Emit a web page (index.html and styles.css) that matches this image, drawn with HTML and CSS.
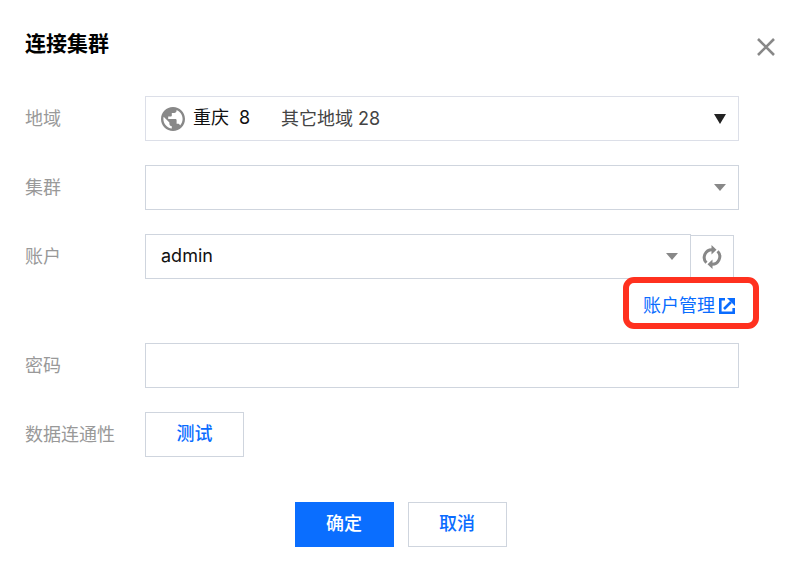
FILE: index.html
```html
<!DOCTYPE html>
<html lang="zh-CN">
<head>
<meta charset="utf-8">
<meta name="viewport" content="width=device-width, initial-scale=1">
<title>连接集群</title>
<link rel="stylesheet" href="styles.css">
</head>
<body>
<main class="dialog">
  <header class="dialog-header">
    <h1 class="dialog-title">连接集群</h1>
    <button class="close" type="button" aria-label="关闭">
      <svg width="18" height="18" viewBox="0 0 18 18"><path d="M1 1l16 16M17 1L1 17" fill="none" stroke="currentColor" stroke-width="2.6"/></svg>
    </button>
  </header>
  <form class="form">
    <div class="row">
      <label class="label" for="region">地域</label>
      <div class="field field-region">
        <svg class="globe" width="24" height="24" viewBox="2 2 20 20"><path fill="currentColor" d="M12 2C6.48 2 2 6.48 2 12s4.48 10 10 10 10-4.48 10-10S17.52 2 12 2zm-1 17.93c-3.95-.49-7-3.85-7-7.93 0-.62.08-1.21.21-1.79L9 15v1c0 1.1.9 2 2 2v1.93zm6.9-2.54c-.26-.81-1-1.39-1.9-1.39h-1v-3c0-.55-.45-1-1-1H8v-2h2c.55 0 1-.45 1-1V7h2c1.1 0 2-.9 2-2v-.41c2.93 1.19 5 4.06 5 7.41 0 2.08-.8 3.97-2.1 5.39z"/></svg>
        <select class="select region-select" id="region"><option>重庆&nbsp;&nbsp;8</option></select>
        <span class="region-other">其它地域 28</span>
        <svg class="arrow arrow-dark" width="12" height="10" viewBox="0 0 12 10"><path d="M0 0h12L6 10z" fill="currentColor"/></svg>
      </div>
    </div>
    <div class="row">
      <label class="label" for="cluster">集群</label>
      <div class="field">
        <select class="select" id="cluster"><option></option></select>
        <svg class="arrow" width="12" height="7" viewBox="0 0 12 7"><path d="M0 0h12L6 7z" fill="currentColor"/></svg>
      </div>
    </div>
    <div class="row">
      <label class="label" for="account">账户</label>
      <div class="account">
        <div class="account-controls">
          <div class="field">
            <select class="select" id="account"><option>admin</option></select>
            <svg class="arrow" width="12" height="7" viewBox="0 0 12 7"><path d="M0 0h12L6 7z" fill="currentColor"/></svg>
          </div>
          <button class="refresh" type="button" aria-label="刷新">
            <svg width="20" height="24" viewBox="0 0 20 24">
              <g fill="none" stroke="currentColor" stroke-width="3"><path d="M4.4 17.8A7.7 7.7 0 0 1 10.5 4.8"/><path d="M15.6 6.2A7.7 7.7 0 0 1 9.5 19.2"/></g>
              <path fill="currentColor" d="M9.5 0l5 4.8-5 4.8zM10.5 24l-5-4.8 5-4.8z"/>
            </svg>
          </button>
        </div>
        <div class="account-link">
          <a class="link" href="#accounts">账户管理
            <svg width="16" height="16" viewBox="0 0 16 16"><path d="M6 1.3H1.3v13.4h13.4V10M5 11l7-7" fill="none" stroke="currentColor" stroke-width="2.6"/><path d="M8 0h8v8z" fill="currentColor"/></svg>
          </a>
        </div>
      </div>
    </div>
    <div class="row">
      <label class="label" for="password">密码</label>
      <input class="field input" id="password" type="password">
    </div>
    <div class="row">
      <span class="label" id="connectivity">数据连通性</span>
      <div><button class="button" type="button" aria-describedby="connectivity">测试</button></div>
    </div>
  </form>
  <footer class="actions">
    <button class="button button-primary" type="button">确定</button>
    <button class="button" type="button">取消</button>
  </footer>
</main>
</body>
</html>
```
FILE: styles.css
```css
* {
  box-sizing: border-box;
}

body {
  margin: 0;
  background: #fff;
  color: #000;
  font: 18px/26px Inter, "Noto Sans CJK SC", sans-serif;
}

svg {
  display: block;
  flex: none;
}

button,
select,
input {
  margin: 0;
  font: inherit;
}

button {
  padding: 0;
  cursor: pointer;
}

.dialog {
  padding: 28px 12px 24px 25px;
}

.dialog-header {
  display: flex;
  justify-content: space-between;
  align-items: flex-start;
  height: 32px;
}

.dialog-title {
  margin: 0;
  font-size: 21px;
  line-height: 32px;
  font-weight: 700;
}

.close {
  display: grid;
  place-items: end center;
  width: 20px;
  height: 28px;
  border: 0;
  background: none;
  color: #888;
}

.form {
  display: grid;
  gap: 24px;
  margin: 36px 37px 0 0;
}

.row {
  display: grid;
  grid-template-columns: 120px minmax(0, 1fr);
  align-items: start;
}

.label {
  color: #999;
  line-height: 46px;
  height: 45px;
}

.field {
  display: flex;
  align-items: center;
  width: 100%;
  height: 45px;
  padding-right: 12px;
  border: 1px solid #cfd5de;
  background: #fff;
}

.field-region {
  padding-left: 15px;
  border-color: #dcdfe8;
}

.select {
  flex: 1;
  min-width: 0;
  height: 43px;
  padding: 0 0 1px 15px;
  border: 0;
  background: none;
  color: #111;
  appearance: none;
}

.region-select {
  flex: none;
  padding: 0 0 1px 8px;
}

.region-other {
  margin-left: 30px;
  color: #444;
}

.globe,
.arrow {
  color: #888;
}

.arrow {
  margin-left: auto;
  pointer-events: none;
}

.arrow-dark {
  color: #222;
}

.input {
  padding: 0 15px;
}

.account-controls {
  display: flex;
  align-items: flex-end;
  padding-right: 5px;
}

.refresh {
  display: grid;
  flex: none;
  place-items: center;
  width: 44px;
  height: 44px;
  margin-left: -1px;
  border: 1px solid #cfd5de;
  background: #fff;
  color: #888;
}

.account-link {
  position: relative;
  display: flex;
  justify-content: flex-end;
  height: 40px;
}

.link {
  position: absolute;
  top: -2px;
  right: -20px;
  display: flex;
  align-items: center;
  gap: 4px;
  height: 52px;
  padding: 5px 18px 0 14px;
  border: 6px solid #ff311f;
  border-radius: 11px;
  color: #0a6cff;
  text-decoration: none;
}

.button {
  width: 99px;
  height: 45px;
  padding-bottom: 2px;
  border: 1px solid #cfd5de;
  background: #fff;
  color: #0a6cff;
  font-weight: 500;
}

.button-primary {
  border-color: #0a6eff;
  background: #0a6eff;
  color: #fff;
}

.actions {
  display: flex;
  justify-content: center;
  gap: 14px;
  margin-top: 45px;
}
```
